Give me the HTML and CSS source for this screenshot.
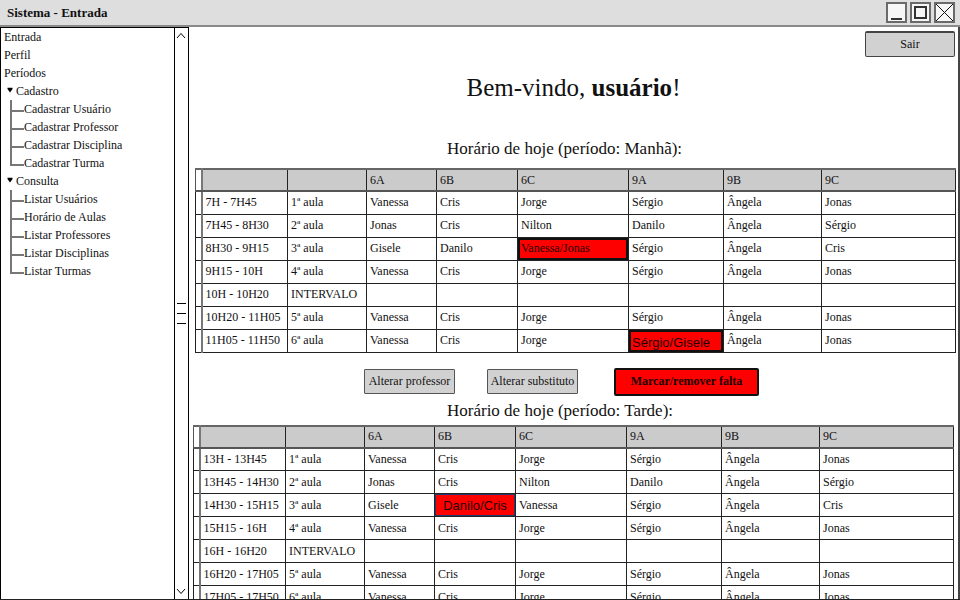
FILE: index.html
```html
<!DOCTYPE html>
<html lang="pt-BR">
<head>
<meta charset="utf-8">
<title>Sistema - Entrada</title>
<link rel="stylesheet" href="styles.css">
</head>
<body>
<div class="window">
  <header class="titlebar">
    <span class="title">Sistema - Entrada</span>
    <div class="winbtns">
      <span class="winbtn"><svg width="17" height="17" viewBox="0 0 17 17"><line x1="3" y1="15" x2="14" y2="15" stroke="#333" stroke-width="2"/></svg></span>
      <span class="winbtn"><svg width="17" height="17" viewBox="0 0 17 17"><rect x="3" y="3" width="11" height="11" fill="none" stroke="#333" stroke-width="2"/></svg></span>
      <span class="winbtn"><svg width="17" height="17" viewBox="0 0 17 17"><line x1="0" y1="0" x2="17" y2="17" stroke="#111" stroke-width="1"/><line x1="17" y1="0" x2="0" y2="17" stroke="#111" stroke-width="1"/></svg></span>
    </div>
  </header>
  <div class="body">
    <aside class="sidebar">
      <nav class="tree">
        <div class="item">Entrada</div>
        <div class="item">Perfil</div>
        <div class="item">Períodos</div>
        <div class="item group"><svg class="caret" width="6" height="6" viewBox="0 0 6 6"><path d="M0.5,0.8 L5.5,0.8 L5.5,2 L3,5.4 L0.5,2 Z" fill="#000"/></svg>Cadastro</div>
        <ul class="children">
          <li>Cadastrar Usuário</li>
          <li>Cadastrar Professor</li>
          <li>Cadastrar Disciplina</li>
          <li>Cadastrar Turma</li>
        </ul>
        <div class="item group"><svg class="caret" width="6" height="6" viewBox="0 0 6 6"><path d="M0.5,0.8 L5.5,0.8 L5.5,2 L3,5.4 L0.5,2 Z" fill="#000"/></svg>Consulta</div>
        <ul class="children">
          <li>Listar Usuários</li>
          <li>Horário de Aulas</li>
          <li>Listar Professores</li>
          <li>Listar Disciplinas</li>
          <li>Listar Turmas</li>
        </ul>
      </nav>
      <div class="scrollbar">
        <svg width="10" height="7" viewBox="0 0 10 7"><polyline points="1,6 5,1.5 9,6" fill="none" stroke="#000" stroke-width="1"/></svg>
        <div class="grip"><i></i><i></i><i></i></div>
        <svg width="10" height="7" viewBox="0 0 10 7"><polyline points="1,1 5,5.5 9,1" fill="none" stroke="#000" stroke-width="1"/></svg>
      </div>
    </aside>
    <main class="main">
      <div class="topbar"><button class="btn btn-sair">Sair</button></div>
      <h1 class="welcome">Bem-vindo, <b>usuário</b>!</h1>
      <h2 class="subtitle subtitle-first">Horário de hoje (período: Manhã):</h2>
      <table class="sched sched-morning">
        <colgroup><col class="c0"><col class="c1"><col class="c2"><col class="c3"><col class="c4"><col class="c5"><col class="c6"><col class="c7"><col class="c8"></colgroup>
        <thead>
          <tr><th class="gut"></th><th></th><th></th><th>6A</th><th>6B</th><th>6C</th><th>9A</th><th>9B</th><th>9C</th></tr>
        </thead>
        <tbody>
          <tr><td class="gut"></td><td>7H - 7H45</td><td>1ª aula</td><td>Vanessa</td><td>Cris</td><td>Jorge</td><td>Sérgio</td><td>Ângela</td><td>Jonas</td></tr>
          <tr><td class="gut"></td><td>7H45 - 8H30</td><td>2ª aula</td><td>Jonas</td><td>Cris</td><td>Nilton</td><td>Danilo</td><td>Ângela</td><td>Sérgio</td></tr>
          <tr><td class="gut"></td><td>8H30 - 9H15</td><td>3ª aula</td><td>Gisele</td><td>Danilo</td><td class="miss">Vanessa/Jonas</td><td>Sérgio</td><td>Ângela</td><td>Cris</td></tr>
          <tr><td class="gut"></td><td>9H15 - 10H</td><td>4ª aula</td><td>Vanessa</td><td>Cris</td><td>Jorge</td><td>Sérgio</td><td>Ângela</td><td>Jonas</td></tr>
          <tr><td class="gut"></td><td>10H - 10H20</td><td>INTERVALO</td><td></td><td></td><td></td><td></td><td></td><td></td></tr>
          <tr><td class="gut"></td><td>10H20 - 11H05</td><td>5ª aula</td><td>Vanessa</td><td>Cris</td><td>Jorge</td><td>Sérgio</td><td>Ângela</td><td>Jonas</td></tr>
          <tr><td class="gut"></td><td>11H05 - 11H50</td><td>6ª aula</td><td>Vanessa</td><td>Cris</td><td>Jorge</td><td class="miss miss-sans">Sérgio/Gisele</td><td>Ângela</td><td>Jonas</td></tr>
        </tbody>
      </table>
      <div class="actions">
        <button class="btn btn-gray">Alterar professor</button>
        <button class="btn btn-gray">Alterar substituto</button>
        <button class="btn btn-red">Marcar/remover falta</button>
      </div>
      <h2 class="subtitle subtitle-second">Horário de hoje (período: Tarde):</h2>
      <table class="sched sched-afternoon">
        <colgroup><col class="c0"><col class="c1"><col class="c2"><col class="c3"><col class="c4"><col class="c5"><col class="c6"><col class="c7"><col class="c8"></colgroup>
        <thead>
          <tr><th class="gut"></th><th></th><th></th><th>6A</th><th>6B</th><th>6C</th><th>9A</th><th>9B</th><th>9C</th></tr>
        </thead>
        <tbody>
          <tr><td class="gut"></td><td>13H - 13H45</td><td>1ª aula</td><td>Vanessa</td><td>Cris</td><td>Jorge</td><td>Sérgio</td><td>Ângela</td><td>Jonas</td></tr>
          <tr><td class="gut"></td><td>13H45 - 14H30</td><td>2ª aula</td><td>Jonas</td><td>Cris</td><td>Nilton</td><td>Danilo</td><td>Ângela</td><td>Sérgio</td></tr>
          <tr><td class="gut"></td><td>14H30 - 15H15</td><td>3ª aula</td><td>Gisele</td><td class="miss-center">Danilo/Cris</td><td>Vanessa</td><td>Sérgio</td><td>Ângela</td><td>Cris</td></tr>
          <tr><td class="gut"></td><td>15H15 - 16H</td><td>4ª aula</td><td>Vanessa</td><td>Cris</td><td>Jorge</td><td>Sérgio</td><td>Ângela</td><td>Jonas</td></tr>
          <tr><td class="gut"></td><td>16H - 16H20</td><td>INTERVALO</td><td></td><td></td><td></td><td></td><td></td><td></td></tr>
          <tr><td class="gut"></td><td>16H20 - 17H05</td><td>5ª aula</td><td>Vanessa</td><td>Cris</td><td>Jorge</td><td>Sérgio</td><td>Ângela</td><td>Jonas</td></tr>
          <tr><td class="gut"></td><td>17H05 - 17H50</td><td>6ª aula</td><td>Vanessa</td><td>Cris</td><td>Jorge</td><td>Sérgio</td><td>Ângela</td><td>Jonas</td></tr>
        </tbody>
      </table>
    </main>
  </div>
</div>
</body>
</html>
```

FILE: styles.css
```css
* { box-sizing: border-box; }
html, body { margin: 0; padding: 0; }
body {
  width: 960px;
  height: 600px;
  overflow: hidden;
  background: #fff;
  color: #111;
  font-family: "Liberation Serif", "Times New Roman", serif;
}
.window {
  height: 600px;
  display: flex;
  flex-direction: column;
  border-bottom: 1px solid #222;
}
.titlebar {
  flex: none;
  height: 27px;
  background: #dedede;
  border-bottom: 2px solid #8a8a8a;
  display: flex;
  align-items: center;
  padding: 0 5px 0 7px;
}
.title { font-size: 13px; font-weight: bold; }
.winbtns { margin-left: auto; display: flex; gap: 3px; }
.winbtn {
  width: 21px;
  height: 21px;
  border: 2px solid #6a6a6a;
  background: #f6f6f6;
  display: block;
}
.winbtn svg { display: block; }
.body { flex: 1; display: flex; min-height: 0; }
.sidebar { flex: none; width: 189px; display: flex; }
.tree {
  width: 175px;
  border: 1px solid #000;
  border-bottom: none;
  font-size: 12px;
  overflow: hidden;
}
.item { height: 18px; line-height: 18px; padding-left: 3px; white-space: nowrap; }
.group { padding-left: 6px; display: flex; align-items: center; }
.caret { margin-right: 3px; margin-top: -2px; flex: none; }
.children { list-style: none; margin: 0; padding: 0; }
.children li {
  position: relative;
  height: 18px;
  line-height: 18px;
  padding-left: 23px;
  white-space: nowrap;
}
.children li::before {
  content: "";
  position: absolute;
  left: 9px;
  top: 0;
  width: 12px;
  height: 10px;
  border-left: 2px solid #777;
  border-bottom: 2px solid #777;
}
.children li:not(:last-child)::after {
  content: "";
  position: absolute;
  left: 9px;
  top: 9px;
  bottom: 0;
  border-left: 2px solid #777;
}
.scrollbar {
  width: 14px;
  border-top: 1px solid #000;
  border-right: 1px solid #000;
  display: flex;
  flex-direction: column;
  align-items: center;
  justify-content: space-between;
  padding: 4px 1px 4px 0;
}
.scrollbar svg { display: block; }
.grip { display: flex; flex-direction: column; gap: 9px; width: 9px; }
.grip i { display: block; height: 1px; background: #000; }
.main {
  flex: 1;
  min-width: 0;
  display: flex;
  flex-direction: column;
  border-right: 2px solid #444;
  overflow: hidden;
}
.topbar { display: flex; justify-content: flex-end; padding: 4px 3px 0 0; }
.btn {
  font-family: "Liberation Serif", "Times New Roman", serif;
  font-size: 12px;
  color: #111;
  padding: 0;
  cursor: pointer;
}
.btn-sair {
  width: 90px;
  height: 26px;
  background: #d1d1d1;
  border: 1px solid #444;
  border-top-width: 2px;
  border-radius: 2px;
}
.welcome {
  margin: 16px 0 0;
  height: 30px;
  font-size: 25px;
  line-height: 30px;
  font-weight: normal;
  text-align: center;
}
.welcome b { font-weight: bold; }
.subtitle {
  margin: 0;
  height: 20px;
  font-size: 17px;
  line-height: 20px;
  font-weight: normal;
  padding-left: 258px;
  white-space: nowrap;
}
.subtitle-first { margin-top: 36px; }
.subtitle-second { margin-top: 5px; }
.sched {
  flex: none;
  border-collapse: collapse;
  table-layout: fixed;
  width: 760px;
  font-size: 12px;
}
.sched-morning { margin: 9px 0 0 6px; }
.sched-afternoon { margin: 4px 0 0 4px; }
.c0 { width: 6px; }
.c1 { width: 86px; }
.c2 { width: 79px; }
.c3 { width: 70px; }
.c4 { width: 81px; }
.c5 { width: 111px; }
.c6 { width: 95px; }
.c7 { width: 98px; }
.c8 { width: 134px; }
.sched tr { height: 23px; }
.sched thead tr { height: 22px; }
.sched th, .sched td {
  border: 1px solid #222;
  padding: 0 0 0 3px;
  text-align: left;
  font-weight: normal;
  white-space: nowrap;
  overflow: hidden;
  vertical-align: middle;
}
.sched thead th {
  background: #cbcbcb;
  border-top: 2px solid #666;
  border-bottom: 2px solid #555;
  border-left-color: #555;
}
.sched .gut { padding: 0; background: #fff; border-right: 2px solid #777; }
.sched thead th.gut { background: #fff; }
.sched .miss {
  background: #ff0000;
  box-shadow: inset 0 0 0 2px #111;
  color: #220000;
  padding-left: 3px;
}
.sched .miss-sans {
  font-family: "Liberation Sans", Arial, sans-serif;
  font-size: 13px;
  padding-top: 3px;
}
.sched .miss-center {
  background: #ff0000;
  box-shadow: inset 0 0 0 1px #223a70;
  font-family: "Liberation Sans", Arial, sans-serif;
  font-size: 13px;
  text-align: center;
  padding: 0;
  color: #220000;
}
.actions {
  margin-top: 15px;
  height: 28px;
  display: flex;
  align-items: center;
  padding-left: 175px;
  gap: 32px;
}
.btn-gray {
  width: 91px;
  height: 25px;
  background: #d1d1d1;
  border: 1px solid #555;
  border-radius: 1px;
}
.btn-red {
  margin-left: 4px;
  width: 145px;
  height: 28px;
  background: #ff0000;
  border: 2px solid #111;
  border-radius: 2px;
  font-weight: bold;
  color: #1a0000;
}
```
